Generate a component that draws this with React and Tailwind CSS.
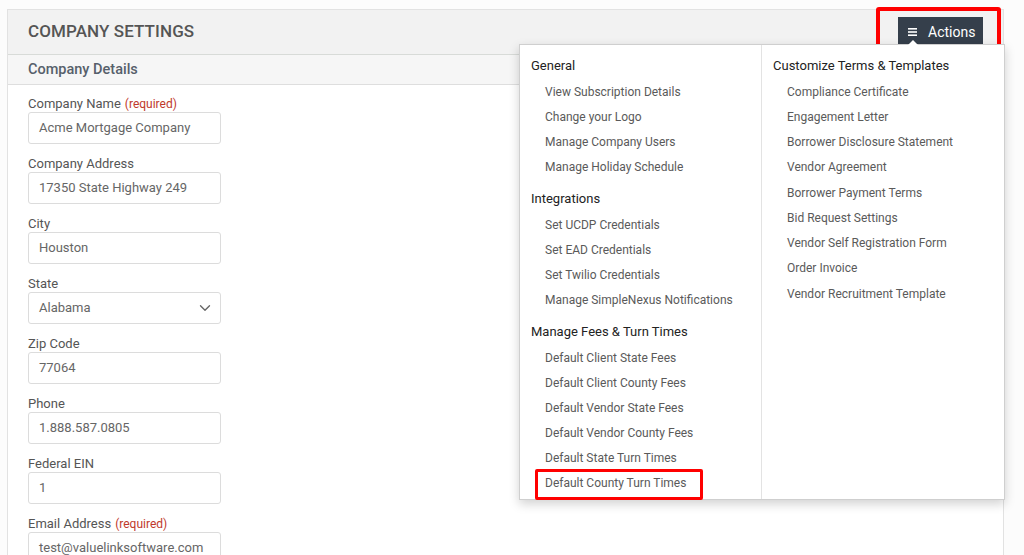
import React from 'react';
import { ChevronDown } from 'lucide-react';

const fields = [
  { label: 'Company Name', required: true, value: 'Acme Mortgage Company' },
  { label: 'Company Address', value: '17350 State Highway 249' },
  { label: 'City', value: 'Houston' },
  { label: 'State', value: 'Alabama', select: true },
  { label: 'Zip Code', value: '77064' },
  { label: 'Phone', value: '1.888.587.0805' },
  { label: 'Federal EIN', value: '1' },
  { label: 'Email Address', required: true, value: 'test@valuelinksoftware.com' },
];

const leftMenu = [
  {
    title: 'General',
    items: ['View Subscription Details', 'Change your Logo', 'Manage Company Users', 'Manage Holiday Schedule'],
  },
  {
    title: 'Integrations',
    items: ['Set UCDP Credentials', 'Set EAD Credentials', 'Set Twilio Credentials', 'Manage SimpleNexus Notifications'],
  },
  {
    title: 'Manage Fees & Turn Times',
    items: [
      'Default Client State Fees',
      'Default Client County Fees',
      'Default Vendor State Fees',
      'Default Vendor County Fees',
      'Default State Turn Times',
      'Default County Turn Times',
    ],
  },
];

const rightMenu = [
  {
    title: 'Customize Terms & Templates',
    items: [
      'Compliance Certificate',
      'Engagement Letter',
      'Borrower Disclosure Statement',
      'Vendor Agreement',
      'Borrower Payment Terms',
      'Bid Request Settings',
      'Vendor Self Registration Form',
      'Order Invoice',
      'Vendor Recruitment Template',
    ],
  },
];

const MenuColumn = ({ sections, highlight, tall }) => (
  <div className="pt-[7px]">
    {sections.map((section, i) => (
      <div key={section.title} className={i > 0 ? 'mt-[6px]' : ''}>
        <div className="h-[27px] flex items-center pl-[11px] text-[13px] text-[#222]">
          {section.title}
        </div>
        {section.items.map(item => (
          <div
            key={item}
            className={`relative ${tall ? 'h-[25.25px]' : 'h-[25px]'} flex items-center pl-[25px] text-[12px] text-[#5a5a5a]`}
          >
            {item}
            {item === highlight && (
              <span className="absolute left-[15px] top-[-1px] w-[168px] h-[31px] border-[3px] border-[#ff0000] rounded-[2px]" />
            )}
          </div>
        ))}
      </div>
    ))}
  </div>
);

const App = () => {
  return (
    <div className="h-[555px] overflow-hidden bg-[#fcfcfc] pt-[9px] pl-[7px] font-['Roboto',sans-serif]">
      <div className="relative w-[997px] border border-[#e2e2e2] bg-white">
        {/* Header */}
        <div className="h-[45px] flex items-center justify-between bg-[#f2f2f2] border-b border-[#d8dbd8] pl-[20px] pr-[20px]">
          <h1 className="text-[17px] font-medium text-[#555] tracking-[0.1px]">COMPANY SETTINGS</h1>
          <button className="relative h-[30px] w-[85px] bg-[#353f4b] text-white flex items-center pl-[10px] text-[14px]">
            <svg width="9" height="8" viewBox="0 0 9 8" className="mr-[11px]">
              <rect x="0" y="0" width="9" height="1.6" fill="white" />
              <rect x="0" y="3.2" width="9" height="1.6" fill="white" />
              <rect x="0" y="6.4" width="9" height="1.6" fill="white" />
            </svg>
            Actions
          </button>
        </div>

        {/* Red highlight around Actions */}
        <span className="absolute left-[868px] top-[-3px] w-[125px] h-[51px] border-4 border-[#ff0000] rounded-[3px]" />

        {/* Sub header */}
        <div className="h-[30px] flex items-center bg-[#f6f6f6] border-b border-[#dedede] pl-[20px]">
          <h2 className="text-[14.5px] font-medium text-[#56606b]">Company Details</h2>
        </div>

        {/* Form */}
        <div className="pl-[20px] pt-[10px] pb-[20px]">
          {fields.map(f => (
            <div key={f.label} className="mb-[11px]">
              <div className="h-[17px] flex items-center text-[13px] text-[#555]">
                {f.label}
                {f.required && <span className="ml-[4px] text-[12px] text-[#c0392b]">(required)</span>}
              </div>
              <div className="w-[193px] h-[32px] border border-[#dcdcdc] rounded-[3px] bg-white flex items-center justify-between pl-[10px] pr-[6px] text-[13px] text-[#666]">
                <span>{f.value}</span>
                {f.select && <ChevronDown size={18} strokeWidth={1.8} className="text-[#666]" />}
              </div>
            </div>
          ))}
        </div>

        {/* Actions dropdown */}
        <div className="absolute left-[511px] top-[34px] w-[486px] h-[456px] bg-white border border-[#cfcfcf] shadow-[0_4px_10px_rgba(0,0,0,0.18)] flex">
          <span className="absolute left-[388px] top-[-5px] w-0 h-0 border-l-[5px] border-r-[5px] border-b-[5px] border-l-transparent border-r-transparent border-b-white" />
          <div className="w-[242px] border-r border-[#e3e3e3]">
            <MenuColumn sections={leftMenu} highlight="Default County Turn Times" />
          </div>
          <div className="flex-1">
            <MenuColumn sections={rightMenu} tall />
          </div>
        </div>
      </div>
    </div>
  );
};

export default App;
